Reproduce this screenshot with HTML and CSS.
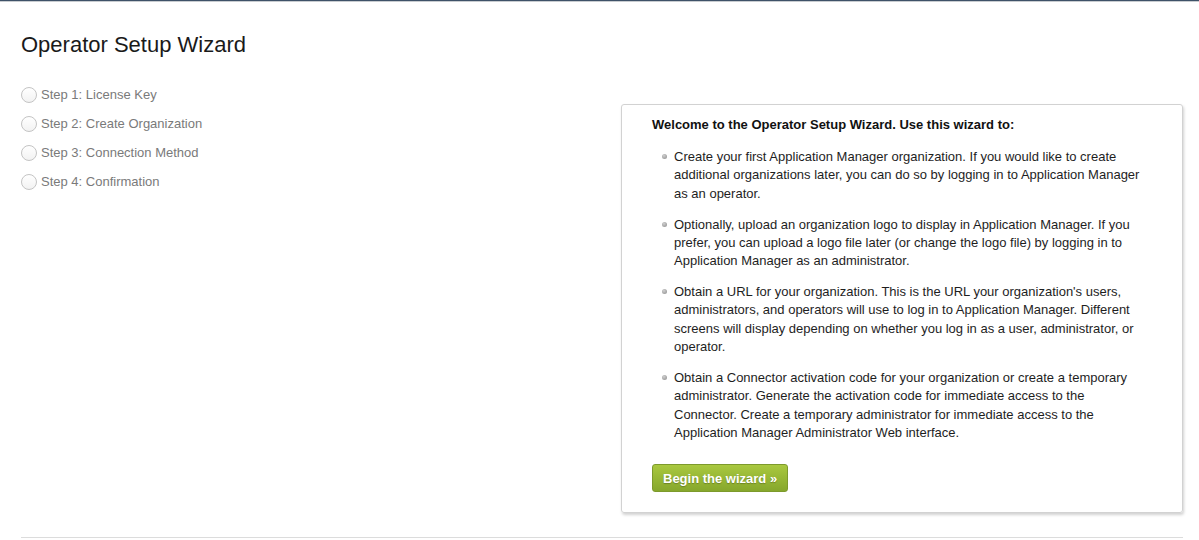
FILE: index.html
```html
<!DOCTYPE html>
<html>
<head>
<meta charset="utf-8">
<link rel="stylesheet" href="styles.css">
</head>
<body>
<div class="topbar"></div>
<div class="page">
  <h1 class="title">Operator Setup Wizard</h1>
  <div class="main">
    <ul class="steps">
      <li class="step"><span class="radio"></span>Step 1: License Key</li>
      <li class="step"><span class="radio"></span>Step 2: Create Organization</li>
      <li class="step"><span class="radio"></span>Step 3: Connection Method</li>
      <li class="step"><span class="radio"></span>Step 4: Confirmation</li>
    </ul>
    <div class="panel">
      <h2 class="panel-title">Welcome to the Operator Setup Wizard. Use this wizard to:</h2>
      <ul class="bullets">
        <li>Create your first Application Manager organization. If you would like to create additional organizations later, you can do so by logging in to Application Manager as an operator.</li>
        <li>Optionally, upload an organization logo to display in Application Manager. If you prefer, you can upload a logo file later (or change the logo file) by logging in to Application Manager as an administrator.</li>
        <li>Obtain a URL for your organization. This is the URL your organization's users, administrators, and operators will use to log in to Application Manager. Different screens will display depending on whether you log in as a user, administrator, or operator.</li>
        <li>Obtain a Connector activation code for your organization or create a temporary administrator. Generate the activation code for immediate access to the Connector. Create a temporary administrator for immediate access to the Application Manager Administrator Web interface.</li>
      </ul>
      <button class="btn">Begin the wizard &raquo;</button>
    </div>
  </div>
  <div class="footer-line"></div>
</div>
</body>
</html>
```
FILE: styles.css
```css
html, body {
  margin: 0;
  padding: 0;
  background: #fff;
  font-family: "Liberation Sans", Arial, sans-serif;
  color: #222;
}
.topbar {
  height: 1px;
  background: #3e5268;
  border-bottom: 1px solid #c8ccd0;
}
.page {
  padding: 0 16px 0 21px;
}
.title {
  margin: 30px 0 0 0;
  font-size: 22px;
  line-height: 26px;
  font-weight: normal;
  color: #1a1a1a;
}
.main {
  display: flex;
  align-items: flex-start;
  margin-top: 22px;
}
.steps {
  list-style: none;
  margin: 0;
  padding: 0;
  width: 600px;
}
.step {
  display: flex;
  align-items: center;
  height: 29px;
  font-size: 13px;
  color: #7a7a7a;
}
.radio {
  width: 14px;
  height: 14px;
  border: 1px solid #c4c4c4;
  border-radius: 50%;
  background: linear-gradient(#fff, #f2f2f2);
  margin-right: 4px;
  flex: none;
}
.panel {
  margin-top: 24px;
  width: 500px;
  flex: 1;
  border: 1px solid #d2d2d2;
  border-radius: 3px;
  box-shadow: 1px 2px 3px rgba(0, 0, 0, 0.18);
  padding: 11px 40px 20px 30px;
  font-size: 13px;
}
.panel-title {
  margin: 0;
  font-size: 13px;
  font-weight: bold;
  line-height: 18px;
  color: #111;
}
.bullets {
  list-style: none;
  margin: 14px 0 0 0;
  padding: 0 0 0 22px;
}
.bullets li {
  position: relative;
  line-height: 18.33px;
  color: #1e1e1e;
  margin-bottom: 12.6px;
}
.bullets li:last-child {
  margin-bottom: 0;
}
.bullets li::before {
  content: "";
  position: absolute;
  left: -12px;
  top: 6px;
  width: 5px;
  height: 5px;
  border-radius: 50%;
  background: radial-gradient(circle at 40% 35%, #d0d0d0, #8a8a8a);
}
.btn {
  margin-top: 22px;
  height: 28px;
  padding: 0 10px;
  border: 1px solid #7d9a2c;
  border-radius: 3px;
  background: linear-gradient(#a9c83f, #86a72c);
  color: #fff;
  font-family: "Liberation Sans", Arial, sans-serif;
  font-size: 13px;
  font-weight: bold;
  text-shadow: 0 1px 1px rgba(0, 0, 0, 0.25);
  display: block;
}
.footer-line {
  margin-top: 24px;
  height: 1px;
  background: #dcdcdc;
}
```
